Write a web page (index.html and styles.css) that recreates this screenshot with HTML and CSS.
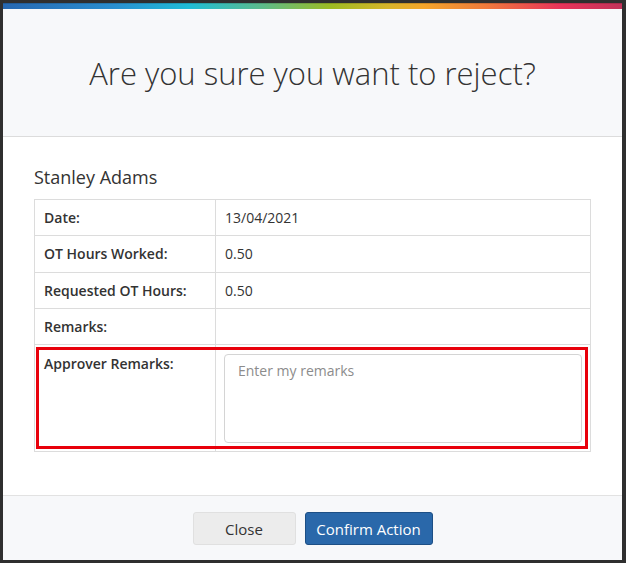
FILE: index.html
```html
<!DOCTYPE html>
<html lang="en">
<head>
  <meta charset="UTF-8" />
  <meta name="viewport" content="width=device-width, initial-scale=1.0" />
  <title>Reject Overtime</title>
  <link rel="stylesheet" href="styles.css">
</head>
<body>
  <div class="modal">
    <div class="rainbow"></div>
    <div class="modal-header">
      <h1>Are you sure you want to reject?</h1>
    </div>
    <div class="modal-body">
      <h2 class="employee">Stanley Adams</h2>
      <div class="details">
        <table>
          <tr>
            <th>Date:</th>
            <td>13/04/2021</td>
          </tr>
          <tr>
            <th>OT Hours Worked:</th>
            <td>0.50</td>
          </tr>
          <tr>
            <th>Requested OT Hours:</th>
            <td>0.50</td>
          </tr>
          <tr>
            <th>Remarks:</th>
            <td></td>
          </tr>
          <tr class="approver">
            <th>Approver Remarks:</th>
            <td><textarea placeholder="Enter my remarks"></textarea></td>
          </tr>
        </table>
        <div class="highlight"></div>
      </div>
    </div>
    <div class="modal-footer">
      <button class="btn btn-default">Close</button>
      <button class="btn btn-primary">Confirm Action</button>
    </div>
  </div>
</body>
</html>
```

FILE: styles.css
```css
html, body {
  margin: 0;
  height: 100%;
}

body {
  font-family: 'Open Sans', 'Noto Sans', sans-serif;
  color: #333;
  background: #fff;
}

.modal {
  box-sizing: border-box;
  width: 626px;
  height: 563px;
  border: 3px solid #2f2f2f;
  border-right-width: 4px;
  display: flex;
  flex-direction: column;
  background: #fff;
}

.rainbow {
  height: 6px;
  flex: none;
  background: linear-gradient(to right, #2767b0 0%, #2a8fd0 18%, #1fbcd6 30%, #5dbb8a 42%, #9dbb22 53%, #d6b52a 62%, #f5a52a 68%, #ef7a3c 78%, #e8345a 90%, #c2335a 100%);
  box-shadow: inset 0 1px 0 rgba(0,0,0,0.15);
}

.modal-header {
  flex: none;
  height: 127px;
  background: #f7f8fa;
  border-bottom: 1px solid #dcdcdc;
  display: flex;
  align-items: center;
  justify-content: center;
}

.modal-header h1 {
  margin: 0;
  font-size: 31px;
  font-weight: 300;
  color: #333;
  padding-top: 1px;
}

.modal-body {
  flex: 1;
  padding: 28px 31px 0;
}

.employee {
  margin: 0 0 9px;
  font-size: 18px;
  font-weight: 400;
  line-height: 25px;
  color: #333;
}

.details {
  position: relative;
}

table {
  width: 100%;
  border-collapse: collapse;
  font-size: 14px;
}

th, td {
  border: 1px solid #dcdcdc;
  padding: 8px 9px;
  line-height: 19.25px;
  text-align: left;
  vertical-align: top;
  height: 19.25px;
}

th {
  width: 162px;
  font-weight: 600;
  color: #333;
}

td {
  color: #333;
}

.approver th {
  padding-top: 9px;
}

.approver td {
  padding: 9px 8px 8px 8px;
}

textarea {
  display: block;
  box-sizing: border-box;
  width: 100%;
  height: 89px;
  margin: 0;
  padding: 6px 13px;
  border: 1px solid #d4d4d4;
  border-radius: 4px;
  font-family: inherit;
  font-size: 14px;
  line-height: 19px;
  color: #333;
  resize: none;
}

textarea::placeholder {
  color: #8c8c8c;
}

.highlight {
  position: absolute;
  left: 2px;
  right: 3px;
  bottom: 3px;
  height: 102px;
  border: 3px solid #e8000b;
  box-sizing: border-box;
  pointer-events: none;
}

.modal-footer {
  flex: none;
  background: #f7f8fa;
  border-top: 1px solid #e2e2e2;
  padding: 16px 0 15px;
  display: flex;
  justify-content: center;
  gap: 9px;
}

.btn {
  box-sizing: border-box;
  height: 33px;
  padding: 0 6px;
  border-radius: 3px;
  font-family: inherit;
  font-size: 15px;
  white-space: nowrap;
  cursor: pointer;
}

.btn-default {
  width: 103px;
  background: #ececec;
  border: 1px solid #e0e0e0;
  color: #333;
}

.btn-primary {
  width: 128px;
  background: #2a68aa;
  border: 1px solid #1d4f85;
  color: #fff;
}
```
